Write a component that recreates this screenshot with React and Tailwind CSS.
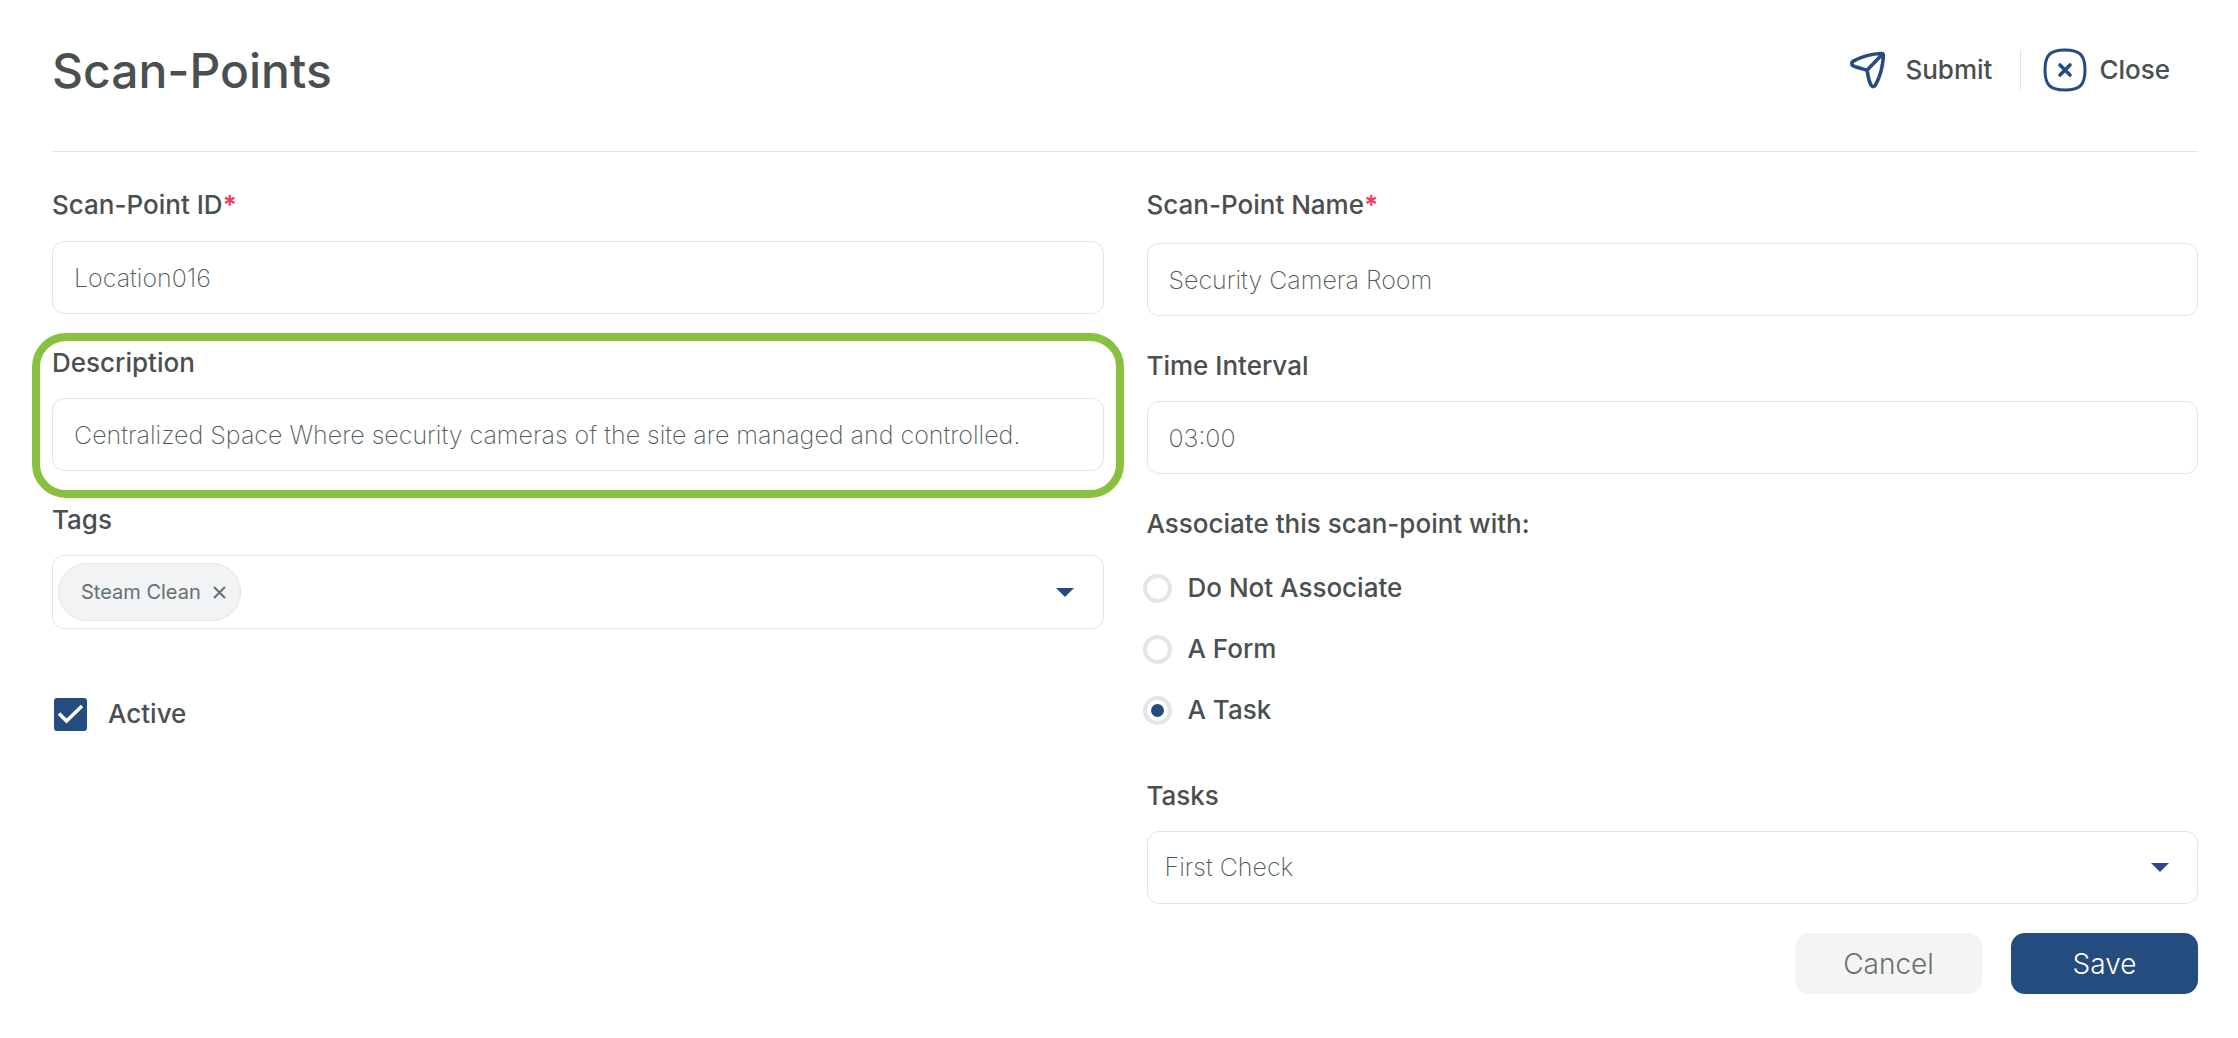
import React, { useState } from 'react';

const ASSOCIATIONS = [
  { value: 'none', label: 'Do Not Associate' },
  { value: 'form', label: 'A Form' },
  { value: 'task', label: 'A Task' },
];

const SubmitIcon = () => (
  <svg viewBox="0 0 36 38" className="w-9 h-[38px]" fill="none" stroke="currentColor" strokeWidth="3.6" strokeLinecap="round" strokeLinejoin="round" aria-hidden="true">
    <path d="M32.5 2.5C22.5 2.8 12.5 5.7 4.3 10.1C2.2 11.3 2.1 13.7 4.3 14.8C8.3 16.7 13.2 17.7 18 19.2C19.2 24 19.3 29.8 22.2 34.3C23.4 36.2 25.5 35.9 26.5 33.9C31.2 25.4 33.9 14.7 34.4 4.5C34.4 3 33.8 2.5 32.5 2.5Z" />
    <path d="M18 19.2L33.4 3.3" />
  </svg>
);

const CloseIcon = () => (
  <svg viewBox="0 0 44 44" className="w-11 h-11" fill="none" stroke="currentColor" strokeWidth="3" strokeLinecap="round" aria-hidden="true">
    <path d="M22 2C37 2 42 7 42 22C42 37 37 42 22 42C7 42 2 37 2 22C2 7 7 2 22 2Z" />
    <path d="M17 17L27 27M27 17L17 27" strokeWidth="3.6" />
  </svg>
);

const Caret = () => (
  <svg viewBox="0 0 18 9" className="w-[18px] h-[9px] text-[#244c7f]" fill="currentColor" aria-hidden="true">
    <path d="M0 0H18L9 9Z" />
  </svg>
);

const Label = ({ htmlFor, required, children }) => (
  <label htmlFor={htmlFor} className="block text-[26px] leading-9 font-medium">
    {children}
    {required && <span className="text-[#ef3e5e] font-bold">*</span>}
  </label>
);

const TextField = ({ id, label, required, value, gap = 'gap-[17px]' }) => (
  <div className={`flex flex-col ${gap}`}>
    <Label htmlFor={id} required={required}>{label}</Label>
    <input
      id={id}
      type="text"
      defaultValue={value}
      className="w-full h-[73px] px-[21px] rounded-xl border border-[#dfe5e8] bg-white text-[25px] font-extralight text-[#4f5a5d] outline-none focus:border-[#244c7f]"
    />
  </div>
);

const App = () => {
  const [tags, setTags] = useState(['Steam Clean']);
  const [active, setActive] = useState(true);
  const [association, setAssociation] = useState('task');

  return (
    <div className="min-h-screen bg-white pl-[52px] pr-10 pb-11 font-['Inter',sans-serif] text-[#4a4f50]">
      <header className="flex items-center justify-between pt-[43px] pb-[52px] border-b border-[#e3e5e6]">
        <h1 className="text-[48px] leading-[56px] font-medium">Scan-Points</h1>
        <div className="flex items-center pr-7 pb-0.5 text-[26px] leading-9 font-medium">
          <button type="submit" form="scan-point" className="flex items-center gap-5">
            <span className="text-[#244c7f]"><SubmitIcon /></span>
            Submit
          </button>
          <span className="w-px h-10 ml-7 mr-[22px] bg-[#e0e2e3]" />
          <button type="button" className="flex items-center gap-3">
            <span className="text-[#244c7f]"><CloseIcon /></span>
            Close
          </button>
        </div>
      </header>

      <form id="scan-point" onSubmit={(e) => e.preventDefault()} className="pt-[35px]">
        <div className="grid grid-cols-2 gap-x-[43px] items-start">
          <div className="flex flex-col gap-[31px]">
            <TextField id="point-id" label="Scan-Point ID" required value="Location016" gap="gap-[18px]" />

            <div className="relative">
              <TextField
                id="description"
                label="Description"
                value="Centralized Space Where security cameras of the site are managed and controlled."
              />
              {/* Highlight ring around the field */}
              <div className="absolute -left-5 -right-5 -top-3 -bottom-[27px] rounded-[34px] border-8 border-[#8ac03f] pointer-events-none" />
            </div>

            <div className="flex flex-col gap-[17px]">
              <Label htmlFor="tags">Tags</Label>
              <div className="relative flex items-center h-[74px] pl-[5px] rounded-xl border border-[#dfe5e8]">
                {tags.map((tag) => (
                  <span
                    key={tag}
                    className="flex items-center gap-3 h-[58px] pl-[22px] pr-3.5 rounded-full border border-[#dfe5e8] bg-[#f1f3f5] text-[20px] text-[#667073]"
                  >
                    {tag}
                    <button type="button" aria-label={`Remove ${tag}`} onClick={() => setTags(tags.filter((t) => t !== tag))}>
                      <svg viewBox="0 0 13 13" className="w-[13px] h-[13px]" fill="none" stroke="currentColor" strokeWidth="2" aria-hidden="true">
                        <path d="M1 1L12 12M12 1L1 12" />
                      </svg>
                    </button>
                  </span>
                ))}
                <select id="tags" defaultValue="" className="flex-1 h-full appearance-none bg-transparent outline-none">
                  <option value="" />
                </select>
                <span className="absolute right-[29px] pointer-events-none"><Caret /></span>
              </div>
            </div>

            <label className="flex items-center gap-[21px] mt-9 pl-0.5 text-[26px] leading-9 font-medium">
              <span className="relative flex">
                <input
                  type="checkbox"
                  checked={active}
                  onChange={(e) => setActive(e.target.checked)}
                  className="appearance-none w-[33px] h-[33px] rounded-[3px] border-2 border-[#244c7f] checked:bg-[#244c7f]"
                />
                {active && (
                  <svg viewBox="0 0 33 33" className="absolute inset-0 pointer-events-none" fill="none" stroke="white" strokeWidth="3.6" aria-hidden="true">
                    <path d="M5 15.5L12.5 23L28 8" />
                  </svg>
                )}
              </span>
              Active
            </label>
          </div>

          <div className="flex flex-col gap-8">
            <TextField id="point-name" label="Scan-Point Name" required value="Security Camera Room" gap="gap-5" />
            <TextField id="interval" label="Time Interval" value="03:00" />

            <fieldset>
              <legend className="text-[26px] leading-9 font-medium">Associate this scan-point with:</legend>
              <div className="flex flex-col gap-[25px] mt-7 -ml-1">
                {ASSOCIATIONS.map((option) => (
                  <label key={option.value} className="flex items-center gap-4 text-[26px] leading-9 font-medium">
                    <input
                      type="radio"
                      name="association"
                      value={option.value}
                      checked={association === option.value}
                      onChange={() => setAssociation(option.value)}
                      className="appearance-none w-[29px] h-[29px] rounded-full border-4 border-[#e0e6ea] p-1 bg-clip-content checked:bg-[#244c7f]"
                    />
                    {option.label}
                  </label>
                ))}
              </div>
            </fieldset>

            <div className="flex flex-col gap-[17px] mt-[18px]">
              <Label htmlFor="tasks">Tasks</Label>
              <div className="relative flex items-center">
                <select
                  id="tasks"
                  className="w-full h-[73px] px-[17px] appearance-none rounded-xl border border-[#dfe5e8] bg-white text-[25px] font-extralight text-[#4f5a5d] outline-none"
                >
                  <option>First Check</option>
                </select>
                <span className="absolute right-[29px] pointer-events-none"><Caret /></span>
              </div>
            </div>
          </div>
        </div>

        <div className="flex justify-end gap-[29px] mt-[29px] text-[28px] font-light">
          <button type="button" className="w-[187px] h-[61px] rounded-[14px] bg-[#f4f4f4] text-[#667073]">Cancel</button>
          <button type="submit" className="w-[187px] h-[61px] rounded-[14px] bg-[#244c7f] text-white">Save</button>
        </div>
      </form>
    </div>
  );
};

export default App;
